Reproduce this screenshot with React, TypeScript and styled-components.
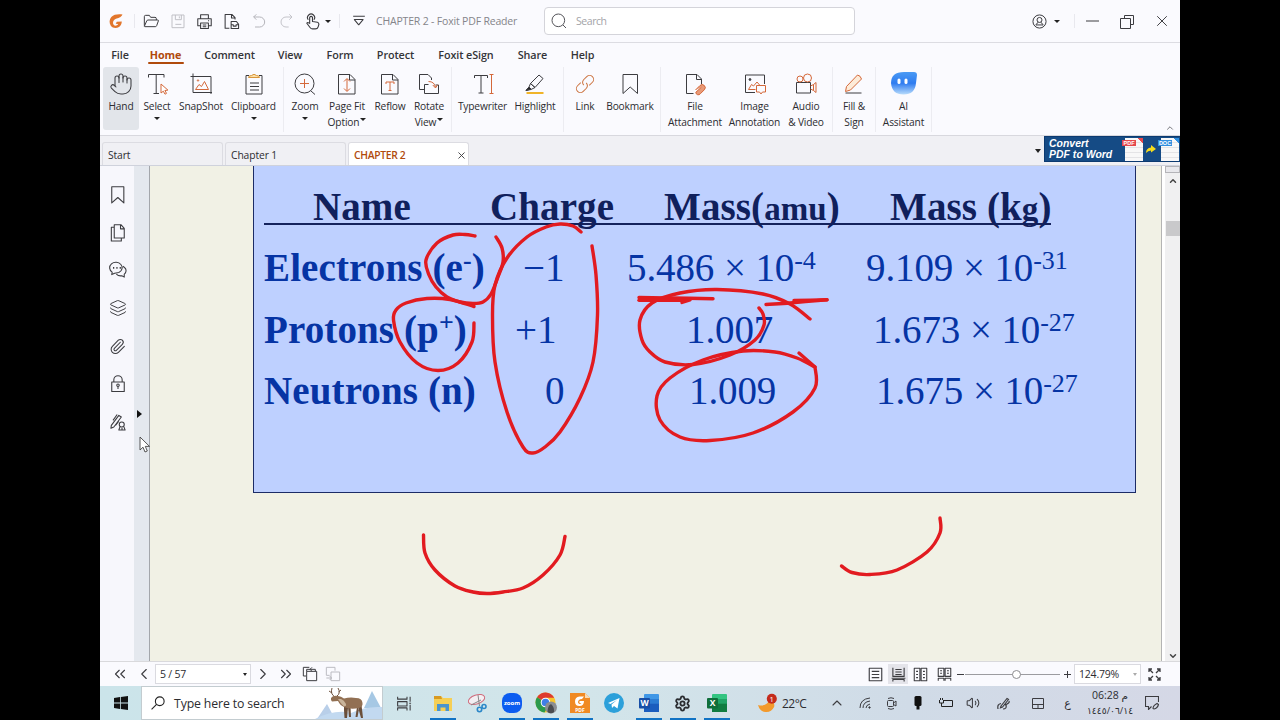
import React from "react";
import styled, { createGlobalStyle, css } from "styled-components";
import {
  ChevronDown,
  ChevronLeft,
  ChevronRight,
  ChevronsLeft,
  ChevronsRight,
  ChevronUp,
  Hand,
  Layers,
  Paperclip,
  Settings,
  Volume2,
  X,
} from "lucide-react";

const ink = "#3c3c40";
const accent = "#b04a0c";
const orange = "#d4683a";

const GlobalStyle = createGlobalStyle`
  * {
    box-sizing: border-box;
  }
  body {
    margin: 0;
    background: #000;
    font-family: "Open Sans", "Noto Sans", sans-serif;
    color: #2c2c30;
  }
  svg {
    display: block;
    flex: none;
  }
`;

const Desktop = styled.div`
  width: 1280px;
  height: 720px;
  display: flex;
  justify-content: center;
  overflow: hidden;
  background: #000;
`;
const Screen = styled.div`
  width: 1080px;
  height: 720px;
  display: flex;
  flex-direction: column;
  overflow: hidden;
  background: #fafafe;
`;
const Cell = styled.div<{ w: number }>`
  width: ${({ w }) => w}px;
  flex: none;
  display: flex;
  align-items: center;
  justify-content: center;
`;
const Spacer = styled.div`
  flex: 1;
`;
const VLine = styled.div`
  width: 1px;
  height: 14px;
  background: #e8e8ee;
`;
const Caret = styled.span<{ size?: number; color?: string }>`
  flex: none;
  width: 0;
  height: 0;
  border: ${({ size = 3 }) => size}px solid transparent;
  border-top: ${({ size = 3 }) => size + 0.5}px solid
    ${({ color = "#222" }) => color};
  border-bottom: 0;
`;

/* title bar */
const TitleBar = styled.div`
  height: 43px;
  flex: none;
  display: flex;
  align-items: center;
  border-bottom: 1px solid #dcdce2;
`;
const WindowTitle = styled.span`
  width: 168px;
  padding-left: 3px;
  font-size: 10.5px;
  letter-spacing: -0.18px;
  white-space: nowrap;
  color: #85858a;
`;
const SearchField = styled.div`
  width: 311px;
  height: 28px;
  display: flex;
  align-items: center;
  gap: 9px;
  padding-left: 6px;
  border: 1px solid #d4d4da;
  border-radius: 4px;
  background: #fff;
  font-size: 10.5px;
  letter-spacing: -0.45px;
  color: #a4a4a8;
`;

/* menu and ribbon */
const MenuBar = styled.div`
  height: 24px;
  flex: none;
  display: flex;
  padding-left: 2px;
`;
const MenuItem = styled.div<{ w: number; active?: boolean }>`
  width: ${({ w }) => w}px;
  display: flex;
  flex-direction: column;
  align-items: center;
  padding-top: 4px;
  font-size: 10.8px;
  font-weight: ${({ active }) => (active ? 700 : 600)};
  line-height: 16px;
  letter-spacing: -0.1px;
  white-space: nowrap;
  color: ${({ active }) => (active ? accent : "#343438")};
  ${({ active }) =>
    active &&
    css`
      &::after {
        content: "";
        width: 36px;
        height: 2.5px;
        margin-top: -1.5px;
        border-radius: 2px;
        background: ${accent};
      }
    `}
`;
const Ribbon = styled.div`
  height: 69px;
  flex: none;
  display: flex;
  border-bottom: 1px solid #d8d8de;
`;
const Group = styled.div<{ w: number; pad?: number }>`
  width: ${({ w }) => w}px;
  height: 65px;
  flex: none;
  display: flex;
  padding-left: ${({ pad = 0 }) => pad}px;
  border-right: 1px solid #ececf1;
`;
const ToolBox = styled.div<{ w: number; pressed?: boolean }>`
  width: ${({ w }) => w}px;
  height: 63px;
  flex: none;
  display: flex;
  flex-direction: column;
  align-items: center;
  padding-top: 5px;
  border-radius: 3px;
  font-size: 10.2px;
  line-height: 16px;
  letter-spacing: -0.16px;
  white-space: nowrap;
  background: ${({ pressed }) => (pressed ? "#e2e5ea" : "transparent")};
  svg + div {
    margin-top: 2px;
  }
  > ${Caret} {
    margin-top: 3px;
  }
`;
const Glyph = styled.svg`
  fill: none;
  stroke-width: 1;
  stroke-linejoin: round;
`;
const ToolLine = styled.div`
  display: flex;
  gap: 1px;
  ${Caret} {
    margin-top: 4px;
  }
`;
const Collapse = styled.div`
  flex: 1;
  display: flex;
  align-items: flex-end;
  justify-content: flex-end;
  padding: 0 5px 2px 0;
`;

/* document tabs */
const TabBar = styled.div`
  height: 29px;
  flex: none;
  display: flex;
  align-items: flex-end;
  gap: 2px;
  padding-left: 2px;
  background: #f0f0f4;
`;
const Tab = styled.div<{ active?: boolean }>`
  width: 121px;
  height: 23px;
  display: flex;
  align-items: center;
  justify-content: space-between;
  padding: 2px 1px 0 5px;
  border: 1px solid #dcdce2;
  border-bottom: 0;
  border-radius: 3px 3px 0 0;
  font-size: 10.3px;
  letter-spacing: -0.1px;
  background: ${({ active }) => (active ? "#fff" : "#f0f0f4")};
  color: ${({ active }) => (active ? accent : "#2c2c30")};
  ${({ active }) =>
    active &&
    css`
      font-weight: 600;
      letter-spacing: -0.3px;
    `}
`;
const TabMenu = styled.div`
  align-self: stretch;
  display: flex;
  align-items: center;
  padding: 1px 1px 0 0;
`;
const Banner = styled.div`
  width: 136px;
  height: 26px;
  align-self: flex-start;
  display: flex;
  align-items: center;
  padding-left: 4px;
  border: 1px solid #0c3a70;
  border-right: 0;
  background: #154b85;
`;
const BannerText = styled.div`
  width: 74px;
  font: italic bold 10.4px/11px "Liberation Sans", sans-serif;
  letter-spacing: 0.05px;
  white-space: nowrap;
  color: #fff;
`;
const FileCard = styled.div<{ tint: string }>`
  width: 18px;
  height: 23px;
  margin-left: 2px;
  padding: 2px 0 0;
  background:
    linear-gradient(225deg, ${({ tint }) => tint} 4px, transparent 4px),
    repeating-linear-gradient(#f8f8f8 0 4px, #e4e4e6 4px 5px);
  span {
    display: block;
    width: 14px;
    margin-left: -3px;
    background: ${({ tint }) => tint};
    font: bold 5.5px/6px "Liberation Sans", sans-serif;
    text-align: center;
    color: #fff;
  }
`;

/* document area */
const Body = styled.div`
  height: 497px;
  flex: none;
  display: flex;
  position: relative;
  border-top: 1px solid #cfd2dc;
  border-bottom: 1px solid #d9d9dc;
`;
const SideBar = styled.div`
  width: 34px;
  display: flex;
  flex-direction: column;
  padding: 10px 0 0 1px;
  background: #f7f7fc;
`;
const SideItem = styled.div`
  height: 37.8px;
  display: flex;
  align-items: center;
  justify-content: center;
`;
const Gutter = styled.div`
  width: 16px;
  display: flex;
  align-items: flex-start;
  padding: 244px 0 0 3px;
  border-right: 1px solid #a3a6ab;
  background: #e4e8ee;
`;
const Expander = styled.span`
  border: 4px solid transparent;
  border-left: 5px solid #111;
  border-right: 0;
`;
const Viewport = styled.div`
  width: 1012px;
  position: relative;
  padding-left: 103px;
  border-right: 1px solid #b4b4b4;
  background: #f1f1e5;
`;
const Slide = styled.div`
  width: 883px;
  height: 327px;
  padding: 16px 0 0 10px;
  border: 1px solid #1c2c66;
  border-top: 0;
  background: #bed0ff;
  font-family: "Liberation Serif", serif;
  font-size: 39px;
  line-height: 50px;
  white-space: nowrap;
`;
const SlideRow = styled.div`
  height: 61.5px;
  display: grid;
  grid-template-columns: 226px 137px 239px 220px;
  letter-spacing: -0.1px;
  color: #0634a4;
`;
const HeadRow = styled(SlideRow)`
  width: 787px;
  height: 43px;
  margin-bottom: 18px;
  border-bottom: 2px solid #14225c;
  font-weight: bold;
  letter-spacing: 0.1px;
  color: #10205c;
`;
const Value = styled.div<{ indent?: number; bold?: boolean }>`
  padding-left: ${({ indent = 0 }) => indent}px;
  ${({ bold }) =>
    bold &&
    css`
      font-weight: bold;
      letter-spacing: 0.12px;
    `}
  sup {
    font-size: 26px;
    line-height: 0;
    vertical-align: 12px;
  }
  small {
    font-size: 33px;
  }
`;
const InkLayer = styled.svg`
  position: absolute;
  inset: 0;
  fill: none;
  stroke: #e21b20;
  stroke-width: 3.4;
  stroke-linecap: round;
  stroke-linejoin: round;
`;
const Pointing = styled.svg`
  position: absolute;
  left: 39px;
  top: 270px;
`;
const ScrollBar = styled.div`
  width: 18px;
  display: flex;
  flex-direction: column;
  align-items: center;
  padding: 0 0 0 3px;
  background: linear-gradient(90deg, #fff 3px, #f0f0f1 3px);
`;
const Splitter = styled.div`
  width: 15px;
  height: 7px;
  margin-bottom: 3px;
  border: 1px solid #b4b4b8;
  background: #e8e8ec;
`;
const Thumb = styled.div`
  width: 14px;
  height: 15px;
  margin-top: 35px;
  background: #c9c9cb;
`;

/* status bar */
const StatusBar = styled.div`
  height: 24px;
  flex: none;
  display: flex;
  align-items: center;
  padding-left: 6px;
  background: #fafafe;
`;
const Combo = styled.div<{ w: number }>`
  width: ${({ w }) => w}px;
  height: 20px;
  display: flex;
  align-items: center;
  justify-content: space-between;
  padding: 0 3px 0 4px;
  border: 1px solid #dadae0;
  background: #fff;
  font-size: 10.5px;
  letter-spacing: -0.2px;
`;
const ViewMode = styled(Cell)<{ on?: boolean }>`
  height: 20px;
  background: ${({ on }) => (on ? "#e4e4ea" : "transparent")};
`;
const Track = styled.div`
  width: 95px;
  height: 1px;
  display: flex;
  align-items: center;
  padding-left: 47px;
  background: #9c9ca0;
`;
const Knob = styled.div`
  width: 9px;
  height: 9px;
  flex: none;
  border: 1px solid #8c8c90;
  border-radius: 50%;
  background: #fff;
`;

/* taskbar */
const TaskBar = styled.div`
  height: 34px;
  flex: none;
  display: flex;
  background: linear-gradient(90deg, #cbe4ea, #d2e5ea 45%, #d0dbe7 75%, #d5d8e6);
`;
const TaskSearch = styled.div`
  width: 242px;
  display: flex;
  align-items: center;
  gap: 9px;
  padding-left: 9px;
  border: 1px solid #c3ccd0;
  background: #fff;
  font-size: 12.3px;
  letter-spacing: -0.14px;
  white-space: nowrap;
`;
const TaskItem = styled(Cell)<{ running?: boolean }>`
  padding-top: 2px;
  border-bottom: 2px solid transparent;
  ${({ running }) =>
    running &&
    css`
      background: linear-gradient(#1173c4, #1173c4) center bottom / 26px 2px
        no-repeat border-box;
    `}
`;
const Temp = styled.div`
  width: 43px;
  display: flex;
  align-items: center;
  font-size: 12px;
  letter-spacing: -0.5px;
`;
const Clock = styled.div`
  width: 60px;
  display: flex;
  flex-direction: column;
  align-items: center;
  padding-top: 2px;
  font-size: 10.5px;
  line-height: 15px;
  letter-spacing: -0.2px;
  white-space: nowrap;
  font-family: "Open Sans", "DejaVu Sans", sans-serif;
`;
const ClockDate = styled.span`
  font-size: 9.2px;
`;
const Lang = styled.span`
  font: 11px "DejaVu Sans", sans-serif;
`;

interface IconProps {
  children: React.ReactNode;
  size?: number;
  color?: string;
}
const Icon = ({ children, size = 24, color = ink }: IconProps) => (
  <Glyph width={size} height={size} stroke={color} viewBox="0 0 24 24">
    {children}
  </Glyph>
);

interface ToolProps {
  w: number;
  lines: string[];
  icon: React.ReactNode;
  pressed?: boolean;
  menu?: boolean;
}
const Tool = ({ w, lines, icon, pressed, menu }: ToolProps) => (
  <ToolBox w={w} pressed={pressed}>
    {icon}
    {lines.map((line, i) => (
      <ToolLine key={line}>
        {line}
        {menu && i === 1 && <Caret />}
      </ToolLine>
    ))}
    {menu && lines.length === 1 && <Caret />}
  </ToolBox>
);

const pageFold = (
  <>
    <path d="M3.5 2.5h11.500l5 5v14.500h-16.500z" />
    <path d="M14.5 2.5v5.500h5.500" />
  </>
);

const menus: [string, number][] = [
  ["File", 36],
  ["Home", 55],
  ["Comment", 73],
  ["View", 48],
  ["Form", 52],
  ["Protect", 59],
  ["Foxit eSign", 82],
  ["Share", 51],
  ["Help", 49],
];

type Point = [number, number];

const strokes: Point[][] = [
  [[475, 236], [465, 234.5], [453, 235], [437, 243], [426, 260], [429, 275], [436, 287], [447, 297], [460, 302], [473, 303.5], [483, 302], [491, 294], [498, 277], [503, 262], [502, 248], [496, 237]],
  [[592, 246], [596, 275], [597.5, 315], [593, 362], [580, 398], [560, 432], [545, 447], [533, 453], [523, 447], [507, 412], [495, 362], [492.5, 315], [495, 285], [507, 258], [527, 237], [546, 227], [560, 224], [573, 226], [581, 232]],
  [[474, 306.5], [450, 299.5], [427, 298.5], [406, 303], [396, 310], [393.5, 320], [400, 342], [417, 363], [438, 370.5], [458, 363], [472, 342], [474, 323]],
  [[810, 319], [790, 304], [763, 294], [717, 289.5], [680, 293], [652, 303], [640, 320], [642, 340], [650, 352], [665, 362], [693, 364.5], [730, 355], [755, 340], [764, 325], [763, 314], [759, 308]],
  [[799, 353], [815, 367]],
  [[815, 367], [815, 388], [793, 412], [753, 433], [710, 440.5], [680, 437], [660, 420], [657, 396], [670, 378], [703, 360], [743, 351], [775, 352], [797, 358], [815, 367]],
  [[639, 297.5], [670, 298], [713, 298.7]],
  [[639, 300.3], [687, 300.3]],
  [[682, 302.5], [690, 300]],
  [[766, 304.5], [787, 303.2], [827, 299.8]],
  [[794, 300.5], [827, 299.8]],
  [[423.5, 535], [425, 553], [435, 570], [455, 586], [473, 592], [487, 593.5], [503, 592], [523, 588], [543, 575], [560, 555], [565, 536.5]],
  [[841.5, 566], [852, 572.5], [870, 574.5], [897, 570], [927, 552], [940, 533], [940, 518]],
];

// Catmull-Rom through the pen samples
const toPath = (pts: Point[]) =>
  pts.slice(1).reduce((d, p, i) => {
    const a = pts[i];
    const before = pts[i - 1] || a;
    const after = pts[i + 2] || p;
    const c1 = [a[0] + (p[0] - before[0]) / 6, a[1] + (p[1] - before[1]) / 6];
    const c2 = [p[0] - (after[0] - a[0]) / 6, p[1] - (after[1] - a[1]) / 6];
    return `${d}C${c1} ${c2} ${p}`;
  }, `M${pts[0]}`);

const Header = () => (
  <TitleBar>
    <Cell w={32}>
      <svg width="14" height="15" viewBox="0 0 14 15">
        <path
          d="M13.5.6C9.500 0 5 .3 2.300 3 .2 5.300 0 9 1.800 11.800c1.900 2.500 5.500 2.900 8.200 1.200 1.700-1.100 2.700-3 2.800-5.500L7.800 7.800 6.700 9.700l2.500.3c-1 1.800-3.400 2.200-4.500.8C3.200 8.800 4.500 5.700 7 4.800c2.200-.7 4.600-.8 6.500-4.200z"
          fill="#e2762c"
        />
      </svg>
    </Cell>
    <Cell w={5}>
      <VLine />
    </Cell>
    <Cell w={27}>
      <Icon size={16}>
        <g strokeWidth="1.500">
          <path d="M2 19V5.500q0-2 2-2h5.500l2 3H18q2 0 2 2v2M2 20l3.500-8q.7-1.500 2-1.500h14.500q1.500 0 1 1.500l-2.500 7q-.5 1.500-2 1.500H3q-1 0-1-.5z" />
        </g>
      </Icon>
    </Cell>
    <Cell w={27}>
      <Icon size={16} color="#c0c0c6">
        <path strokeWidth="1.500" d="M3 3h18v19H3zM8 3v7h9V3M14 5v3M8 17h9" />
      </Icon>
    </Cell>
    <Cell w={27}>
      <Icon size={17}>
        <path
          strokeWidth="1.500"
          d="M6.500 8V2.500h11V8M6.500 18H2.500V8h19v10h-4M6.500 14h11v8h-11zM9.500 17h5M9.500 19.500h5M17 11h1.500"
        />
      </Icon>
    </Cell>
    <Cell w={27}>
      <Icon size={17}>
        <path
          strokeWidth="1.500"
          d="M9 21.500H3V2h9.500l4.500 4.500V9M12 2v5h5M11.500 12h7.500l3 4v6H11.500zM11.500 16.500h3v2h4v-2H22"
        />
      </Icon>
    </Cell>
    <Cell w={27}>
      <Icon size={16} color="#b4b4ba">
        <path strokeWidth="1.500" d="M8 2 4 6l4 4M4 6h9a7.500 7.500 0 0 1 0 15H6" />
      </Icon>
    </Cell>
    <Cell w={27}>
      <Icon size={16} color="#c4c4ca">
        <path strokeWidth="1.500" d="m17 2 4 4-4 4M21 6h-9a7.500 7.500 0 0 0 0 15h4" />
      </Icon>
    </Cell>
    <Cell w={27}>
      <Icon size={17}>
        <path
          strokeWidth="1.600"
          d="M8 15V6q2-2.500 4 0v6l7 1q2 .5 2 3l-1 3.500q-1 3-4 3h-4q-2 0-3.500-2l-4.500-6q1-2.500 4 .5"
        />
        <path strokeWidth="1.600" d="M6 9.500a5 5 0 1 1 8 0" />
      </Icon>
    </Cell>
    <Cell w={3}>
      <Caret />
    </Cell>
    <Cell w={20}>
      <VLine />
    </Cell>
    <Cell w={20}>
      <Icon size={14}>
        <path strokeWidth="1.800" d="M2 4h20M4 9.500h15l-7.500 9z" />
      </Icon>
    </Cell>
    <Cell w={4} />
    <WindowTitle>CHAPTER 2 - Foxit PDF Reader</WindowTitle>
    <Spacer />
    <SearchField>
      <Icon size={16} color="#55555a">
        <circle cx="11" cy="11" r="9.500" strokeWidth="1.500" />
        <path strokeWidth="1.500" d="m18 18 4.500 4.500" />
      </Icon>
      Search
    </SearchField>
    <Cell w={170} />
    <Cell w={28}>
      <Icon size={15}>
        <g strokeWidth="1.600">
          <circle cx="12" cy="12" r="10.500" />
          <circle cx="12" cy="9.500" r="4" />
          <path d="M6.500 18v-1q1-2.500 3.500-3.500M17.500 18v-1q-1-2.500-3.500-3.500M6.500 17.500h11" />
        </g>
      </Icon>
    </Cell>
    <Cell w={8}>
      <Caret />
    </Cell>
    <Cell w={27}>
      <VLine />
    </Cell>
    <Cell w={8}>
      <svg width="13" height="2">
        <path d="M0 1h13" stroke={ink} />
      </svg>
    </Cell>
    <Cell w={62}>
      <svg width="15" height="15" fill="none" stroke={ink}>
        <path d="M.5 4.500h10v10H.5zM4.500 4.500v-3h9v9h-3" />
      </svg>
    </Cell>
    <Cell w={8}>
      <X size={18} strokeWidth={1.300} color={ink} />
    </Cell>
    <Cell w={14} />
  </TitleBar>
);

const RibbonBar = () => (
  <Ribbon>
    <Group w={184} pad={3}>
      <Tool
        w={36}
        lines={["Hand"]}
        pressed
        icon={<Hand size={24} strokeWidth={1.050} color={ink} />}
      />
      <Tool
        w={36}
        lines={["Select"]}
        menu
        icon={
          <Icon>
            <path d="M3.500 5.500v-3h15.500v3M11.200 2.500V21M8.500 21.500h5.500" />
            <path d="M16 12v9l2.300-1.800 1.700 3 1.500-.8-1.600-2.900 3-.4z" stroke={orange} fill="#fff" />
          </Icon>
        }
      />
      <Tool
        w={52}
        lines={["SnapShot"]}
        icon={
          <Icon>
            <path d="M1.500 4.500h20.500v17.500M4 1.500V20.500h19" />
            <path d="m6.500 17.500 3.500-5 2.500 2 3-5 4 8z" stroke={orange} />
            <circle cx="9" cy="8.500" r=".7" stroke={orange} />
          </Icon>
        }
      />
      <Tool
        w={53}
        lines={["Clipboard"]}
        menu
        icon={
          <Icon>
            <path d="M7 3.500H4v18.500h16V3.500h-3M8 11h9M8 14.500h9M8 18h9" />
            <path d="M6.500 5.500q0-2 3-2 2.500-2.500 5 0 3 0 3 2z" fill="#fbe0a8" stroke="#d8963c" />
          </Icon>
        }
      />
    </Group>
    <Group w={168}>
      <Tool
        w={42}
        lines={["Zoom"]}
        menu
        icon={
          <Icon>
            <circle cx="11.500" cy="11.500" r="9.500" />
            <path d="m18 19 4 3.500" />
            <path d="M11.500 7v9M7 11.500h9" stroke={orange} />
          </Icon>
        }
      />
      <Tool
        w={42}
        lines={["Page Fit", "Option"]}
        menu
        icon={
          <Icon>
            {pageFold}
            <path d="M12 7v12M9 9.500l3-3 3 3M9 16.500l3 3 3-3" stroke={orange} />
          </Icon>
        }
      />
      <Tool
        w={44}
        lines={["Reflow"]}
        icon={
          <Icon>
            {pageFold}
            <path d="M8 12v-2h8v2M12 10v8.500M10.500 18.500h3" stroke={orange} />
          </Icon>
        }
      />
      <Tool
        w={34}
        lines={["Rotate", "View"]}
        menu
        icon={
          <Icon>
            <path d="M7 17.500H2.500v-15h8.500l3.500 3.500v2M7.500 12.500v9h14v-8.500h-3M7.500 12.500h4" />
            <path d="M11.500 9.500q6 0 7 6M15.800 13l2.700 3 2.200-3.300" stroke={orange} />
          </Icon>
        }
      />
    </Group>
    <Group w={112}>
      <Tool
        w={61}
        lines={["Typewriter"]}
        icon={
          <Icon>
            <path d="M3.500 6v-2.500h13V6M10 3.500v17.500M7.500 21h5" />
            <path d="M18.500 2.500h4M20.500 2.500v19M18.500 21.500h4" stroke={orange} />
          </Icon>
        }
      />
      <Tool
        w={44}
        lines={["Highlight"]}
        icon={
          <Icon>
            <path d="m7.500 11.500 8.500-8.500 4 3.500-8 9zM7.500 11.500 6 15l-3 3.500 5-1 4-2z" />
            <path d="m3 18.500 3-3.500 2 2z" fill="#222" />
            <path d="M3.500 21h17" stroke="#f0b429" strokeWidth="2" />
          </Icon>
        }
      />
    </Group>
    <Group w={97}>
      <Tool
        w={42}
        lines={["Link"]}
        icon={
          <Icon color="#cc7440">
            <path
              transform="rotate(-45 12 12)"
              d="M10 8H5.500a4 4 0 0 0 0 8H10q3.500-.5 3.700-4M14 16h4.500a4 4 0 0 0 0-8H14q-3.500.5-3.700 4"
            />
          </Icon>
        }
      />
      <Tool
        w={48}
        lines={["Bookmark"]}
        icon={
          <Icon>
            <path d="M5 2.500h14.500v19l-7.300-6.500L5 21.500z" />
          </Icon>
        }
      />
    </Group>
    <Group w={172}>
      <Tool
        w={68}
        lines={["File", "Attachment"]}
        icon={
          <Icon>
            <path d="M10.500 21.500h-7v-19h10.500l4.500 4.500v5M13.500 2.500v5h5" />
            <path d="m12.500 18 4.500-4.500a3 3 0 0 1 4.300 4.300l-4 4a2.500 2.500 0 0 1-4.500-1.500l5.500-5" stroke={orange} fill="#e99a78" />
          </Icon>
        }
      />
      <Tool
        w={51}
        lines={["Image", "Annotation"]}
        icon={
          <Icon>
            <path d="M12 20.500H2.500v-17.500h19V12" />
            <circle cx="7" cy="7.500" r=".9" fill={ink} />
            <path d="m5.500 17.500 3-5 2 1.500 3.500-4 3 3.500M5.500 17.500h7M13.500 13.500h9v6.500h-3l-1.500 2-1.500-2h-3z" stroke={orange} />
          </Icon>
        }
      />
      <Tool
        w={52}
        lines={["Audio", "& Video"]}
        icon={
          <Icon>
            <path d="M2.500 10.500h14v10.500h-14z" />
            <circle cx="6" cy="7" r="3" stroke={orange} />
            <circle cx="13.500" cy="6" r="4" stroke={orange} />
            <path d="m16.500 14 3-1.500v6l-3-1.500M19.500 12.500l2.500-2v10l-2.500-2" stroke={orange} />
          </Icon>
        }
      />
    </Group>
    <Group w={43}>
      <Tool
        w={42}
        lines={["Fill &", "Sign"]}
        icon={
          <Icon>
            <path d="m4.500 14.500 11-11.500q3 .5 4 4l-11 11-5 1.500z" stroke={orange} fill="#fdebd8" />
            <path d="M3.500 21h16" />
          </Icon>
        }
      />
    </Group>
    <Group w={56}>
      <Tool
        w={55}
        lines={["AI", "Assistant"]}
        icon={
          <svg width="28" height="24" viewBox="0 0 28 24">
            <defs>
              <linearGradient id="ai" x1="0" y1="0" x2="0" y2="1">
                <stop offset="0" stopColor="#4a9af4" />
                <stop offset=".5" stopColor="#2f7cf0" />
                <stop offset="1" stopColor="#b8dcfb" />
              </linearGradient>
            </defs>
            <path d="M1 11Q1 0 14 0h10q3 0 3 3-.5 4-1 8-1 11.500-12.500 11.500T1 11z" fill="url(#ai)" />
            <rect x="7.500" y="6.500" width="3" height="5.500" rx="1.500" fill="#fff" />
            <rect x="14.500" y="6.500" width="3" height="5.500" rx="1.500" fill="#fff" />
          </svg>
        }
      />
    </Group>
    <Collapse>
      <ChevronUp size={10} strokeWidth={2.400} color="#77777c" />
    </Collapse>
  </Ribbon>
);

const SideTools = () => (
  <SideBar>
    <SideItem>
      <Icon size={20}>
        <path strokeWidth="1.300" d="M4.500 2h14.500v19.500l-7.200-6.500-7.300 6.500z" />
      </Icon>
    </SideItem>
    <SideItem>
      <Icon size={20}>
        <path strokeWidth="1.300" d="M7.500 2h8l4 4.500V18h-12zM15 2v5h4.500M7.500 5H4v16.500h12V18" />
      </Icon>
    </SideItem>
    <SideItem>
      <Icon size={20}>
        <g strokeWidth="1.300">
          <path d="M5 14.500A7.500 6.500 0 1 1 13 15l-5 .8-3.500 1.700z" />
          <path d="M18 7.500q4.500 3 3.500 6.500-.5 2-2 3v3.500l-3-1.500q-4 .5-6.500-2" />
          <path d="M6 9.500h1.500M10 9.500h1.500M14 9.500h1.500" strokeWidth="2" />
        </g>
      </Icon>
    </SideItem>
    <SideItem>
      <Layers size={18} strokeWidth={1.300} color={ink} />
    </SideItem>
    <SideItem>
      <Paperclip size={17} strokeWidth={1.500} color={ink} />
    </SideItem>
    <SideItem>
      <Icon size={20}>
        <g strokeWidth="1.300">
          <path d="M4.500 9.500h15V21h-15zM7 9.500V7a5 5 0 0 1 10 0v2.500" />
          <path d="M12 18v-3" />
          <circle cx="12" cy="13.500" r="1.500" />
        </g>
      </Icon>
    </SideItem>
    <SideItem>
      <Icon size={20}>
        <g strokeWidth="1.300">
          <path d="m4 16 9-12 3 2-9 12-3.500 1.500zM6 10l5-7M9 16l4-5" />
          <circle cx="16.500" cy="15" r="3" />
          <path d="M14.500 17.500 13 21.500h7.500l-1.500-4M16.800 19v2" />
        </g>
      </Icon>
    </SideItem>
  </SideBar>
);

const DocumentArea = () => (
  <Body>
    <SideTools />
    <Gutter>
      <Expander />
    </Gutter>
    <Viewport>
      <Slide>
        <HeadRow>
          <Value indent={49}>Name</Value>
          <Value>Charge</Value>
          <Value indent={37}>
            Mass(<small>amu</small>)
          </Value>
          <Value indent={24}>
            Mass (k<small>g</small>)
          </Value>
        </HeadRow>
        <SlideRow>
          <Value bold>
            Electrons (e<sup>-</sup>)
          </Value>
          <Value indent={33}>−1</Value>
          <Value>
            5.486 × 10<sup>-4</sup>
          </Value>
          <Value>
            9.109 × 10<sup>-31</sup>
          </Value>
        </SlideRow>
        <SlideRow>
          <Value bold>
            Protons (p<sup>+</sup>)
          </Value>
          <Value indent={25}>+1</Value>
          <Value indent={59}>1.007</Value>
          <Value indent={7}>
            1.673 × 10<sup>-27</sup>
          </Value>
        </SlideRow>
        <SlideRow>
          <Value bold>Neutrons (n)</Value>
          <Value indent={55}>0</Value>
          <Value indent={62}>1.009</Value>
          <Value indent={10}>
            1.675 × 10<sup>-27</sup>
          </Value>
        </SlideRow>
      </Slide>
      <InkLayer width="1011" height="494" viewBox="150 166 1011 494">
        {strokes.map((pts, i) => (
          <path key={i} d={toPath(pts)} />
        ))}
      </InkLayer>
    </Viewport>
    <ScrollBar>
      <Splitter />
      <ChevronUp size={10} strokeWidth={3.500} color="#444" />
      <Thumb />
      <Spacer />
      <ChevronDown size={10} strokeWidth={3.500} color="#444" />
    </ScrollBar>
    <Pointing width="12" height="18" viewBox="0 0 12 18">
      <path
        d="M1 1v13l3-2.800 2 4.800 2.300-1-2-4.600h4.200z"
        fill="#fff"
        stroke="#444"
        strokeWidth=".9"
      />
    </Pointing>
  </Body>
);

const Footer = () => (
  <StatusBar>
    <Cell w={27}>
      <ChevronsLeft size={18} strokeWidth={1.500} color={ink} />
    </Cell>
    <Cell w={22}>
      <ChevronLeft size={18} strokeWidth={1.500} color={ink} />
    </Cell>
    <Combo w={96}>
      5 / 57
      <Caret size={2.500} />
    </Combo>
    <Cell w={23}>
      <ChevronRight size={18} strokeWidth={1.500} color={ink} />
    </Cell>
    <Cell w={24}>
      <ChevronsRight size={18} strokeWidth={1.500} color={ink} />
    </Cell>
    <Cell w={23}>
      <Icon size={16}>
        <path strokeWidth="1.500" d="M6 15H2V2h9M7 8h15v14H7zM7 8V5h13v3M15 2l-3 3 3 3" />
      </Icon>
    </Cell>
    <Cell w={24}>
      <Icon size={16} color="#bcbcc2">
        <path strokeWidth="1.500" d="M7 14H2V2h13v5M9 9h13v13H9zM2 18h8M7 15l3 3-3 3" />
      </Icon>
    </Cell>
    <Spacer />
    <ViewMode w={26}>
      <Icon size={15}>
        <path strokeWidth="1.800" d="M2 2h20v20H2zM6 7h12M6 12h12M6 17h12" />
      </Icon>
    </ViewMode>
    <ViewMode w={20} on>
      <Icon size={15}>
        <path strokeWidth="1.800" d="M3 1v14h18V1M7 4h10M7 8h10M7 12h10M1 18h22M3 23v-3h18v3" />
      </Icon>
    </ViewMode>
    <ViewMode w={25}>
      <Icon size={15}>
        <path
          strokeWidth="1.700"
          d="M2 2h9v20H2zM13 2h9v20h-9zM5 7h3M5 12h3M5 17h3M16 7h3M16 12h3M16 17h3"
        />
      </Icon>
    </ViewMode>
    <ViewMode w={22}>
      <Icon size={15}>
        <path
          strokeWidth="1.700"
          d="M2 2h9v13H2zM13 2h9v13h-9zM5 6h3M5 10h3M16 6h3M16 10h3M2 22v-4h9v4M13 22v-4h9v4"
        />
      </Icon>
    </ViewMode>
    <Cell w={10}>
      <svg width="7" height="7">
        <path d="M0 3.500h7" stroke={ink} />
      </svg>
    </Cell>
    <Track>
      <Knob />
    </Track>
    <Cell w={14}>
      <svg width="7" height="7">
        <path d="M0 3.500h7M3.500 0v7" stroke={ink} />
      </svg>
    </Cell>
    <Combo w={67}>
      124.79%
      <Caret size={2.500} color="#aaa" />
    </Combo>
    <Cell w={26}>
      <svg width="13" height="13" fill="none" stroke={ink} strokeWidth="1.300">
        <path d="M1 4V1h3M1 1l4 4M9 1h3v3M12 1 8 5M1 9v3h3M1 12l4-4M9 12h3V9M12 12 8 8" />
      </svg>
    </Cell>
    <Cell w={13} />
  </StatusBar>
);

const Office = ({ shades, letter }: { shades: string[]; letter: string }) => (
  <svg width="20" height="18" viewBox="0 0 20 18">
    <rect x="5" width="15" height="18" rx="1" fill={shades[0]} />
    <path d="M5 5h15v4.500H5z" fill={shades[1]} />
    <path d="M5 9.500h15V18H5z" fill={shades[2]} />
    <rect y="4" width="11" height="10.500" rx="1" fill={shades[3]} />
    <text
      x="5.500"
      y="12.300"
      textAnchor="middle"
      fontSize="8.500"
      fontWeight="bold"
      fontFamily="Open Sans, sans-serif"
      fill="#fff"
    >
      {letter}
    </text>
  </svg>
);

const Reindeer = () => (
  <svg width="67" height="32" viewBox="0 0 67 32">
    <path d="m2 32 10-15 8 15z" fill="#b9cfe9" />
    <path d="M49 21 57 4l9 17z" fill="#a6c8e4" />
    <path d="M0 32q20-10 36-6 14-7 31-6v12z" fill="#c2d9f0" />
    <path d="M20 10q-5-3-3-9M22 9q4-3 1-8M17 6l-3-2M23.500 5l2.500-2" stroke="#6f5340" fill="none" />
    <path d="M29 16h4l0 5-1 10h-2.500l-.5-8zM41 17l5-2 1 7 1 9h-2l-2.500-9zM33 20l2.500 0 .5 10h-2zM42 20l-1.500 10h2l1.500-8z" fill="#6b4f3a" />
    <path d="M16 11q2-3 7-2 3 0 6 2.500 6-1.500 12-.5 6 0 6.500 5 .5 4-3.500 5-8 1.500-14-.5-5-2-7-6.500l-6 .5q-1.500-1.500-1-3.500z" fill="#927053" />
    <path d="M23 12q3 5 5.500 7 3 1 2.500-2-2-4-5-5z" fill="#c9b49a" />
  </svg>
);

const Tasks = () => (
  <TaskBar>
    <Cell w={41}>
      <svg width="14" height="14" viewBox="0 0 14 14" fill="#111">
        <path d="M0 2l6-.9v5.500H0zM6.800 1 14 0v6.600H6.800zM0 7.400h6v5.500L0 12zM6.800 7.400H14V14l-7.200-1z" />
      </svg>
    </Cell>
    <TaskSearch>
      <Icon size={14} color="#222">
        <circle cx="15" cy="9" r="7.500" strokeWidth="1.900" />
        <path strokeWidth="1.900" d="M9.500 14.500 1 23" />
      </Icon>
      Type here to search
      <Spacer />
      <Reindeer />
    </TaskSearch>
    <Cell w={43}>
      <Icon size={15}>
        <path strokeWidth="1.700" d="M1 1v4h15V1M1 9h15v7H1zM1 23v-4h15v4M21 1v8M21 14v9M19.500 11.500h3" />
      </Icon>
    </Cell>
    <TaskItem w={34.25} running>
      <svg width="18" height="15" viewBox="0 0 18 15">
        <path d="M0 0h7l2 2h9v13H0z" fill="#f6cf55" />
        <path d="M0 0h7l1 3H0z" fill="#d89a22" />
        <path d="M3 15V8h12v7h-3.500v-3.500h-5V15z" fill="#4a94cf" />
      </svg>
    </TaskItem>
    <TaskItem w={34.25}>
      <svg width="20" height="20" viewBox="0 0 20 20" fill="none">
        <ellipse cx="9.500" cy="6.500" rx="8.500" ry="4.500" transform="rotate(-18 9.500 6.500)" stroke="#cf6b7c" fill="#f3eef2" />
        <path d="m11 2 1.500 11M4 12l10-5" stroke="#888" />
        <circle cx="12.500" cy="16.500" r="2.200" stroke="#2b87c8" strokeWidth="1.600" />
        <circle cx="17" cy="13.500" r="2" stroke="#2b87c8" strokeWidth="1.600" />
      </svg>
    </TaskItem>
    <TaskItem w={34.25} running>
      <svg width="20" height="20" viewBox="0 0 20 20">
        <rect width="20" height="20" rx="8" fill="#0b5cf0" />
        <text x="10" y="12" textAnchor="middle" fontSize="6" fontWeight="bold" fontFamily="Open Sans, sans-serif" fill="#fff">
          zoom
        </text>
      </svg>
    </TaskItem>
    <TaskItem w={34.25} running>
      <svg width="22" height="22" viewBox="0 0 22 22">
        <circle cx="10.500" cy="10.500" r="10" fill="#f7c52c" />
        <path d="M10.500 10.500 2 5.200A10 10 0 0 1 19.300 5.700H10.500z" fill="#de3b30" />
        <path d="M10.500 10.500 2 5.200a10 10 0 0 0 7.500 15.200l4-7z" fill="#2b9a4c" />
        <circle cx="10.500" cy="10.500" r="4.800" fill="#fff" />
        <circle cx="10.500" cy="10.500" r="3.800" fill="#3f7fe8" />
        <circle cx="16" cy="15.500" r="6" fill="#8b8e92" />
        <path d="M12.500 20q0-6 3.500-8 3.500 3 3 8-3 2.500-6.500 0z" fill="#4a4c50" />
      </svg>
    </TaskItem>
    <TaskItem w={34.25} running>
      <svg width="20" height="20" viewBox="0 0 20 20">
        <path d="M0 0h15l5 5v15H0z" fill="#f08a24" />
        <path d="M15 0v5h5z" fill="#fbd9b0" />
        <path d="M14 3.500H9.500Q5 4 5 8.500T9.500 13t4.500-5H9.500v2h2Q9 12 8 9.500 8 6 12 6z" fill="#fff" />
        <text x="10" y="18.500" textAnchor="middle" fontSize="5" fontWeight="bold" fontFamily="Open Sans, sans-serif" fill="#fff">
          PDF
        </text>
      </svg>
    </TaskItem>
    <TaskItem w={34.25}>
      <svg width="20" height="20" viewBox="0 0 20 20">
        <circle cx="10" cy="10" r="10" fill="#2ca0da" />
        <path d="m4 10 11.500-5-2 10.500-3.500-2.500-2 2-.5-3.500L13 7l-6.500 4z" fill="#fff" />
      </svg>
    </TaskItem>
    <TaskItem w={34.25} running>
      <Office letter="W" shades={["#3f97e6", "#2b7cd3", "#1a5dbe", "#174ea6"]} />
    </TaskItem>
    <TaskItem w={34.25} running>
      <Settings size={17} strokeWidth={2.600} color="#2a2c30" />
    </TaskItem>
    <TaskItem w={34.25} running>
      <Office letter="X" shades={["#33c481", "#21a366", "#107c41", "#0f6e3a"]} />
    </TaskItem>
    <Spacer />
    <Cell w={29}>
      <svg width="20" height="20" viewBox="0 0 21 20">
        <path d="M0 12q6 2 10-2 2-3 2-5 6 3 5 9-3 6-9 5.500Q2 19 0 12z" fill="#f39a2c" />
        <circle cx="14.500" cy="5.500" r="5.300" fill="#c42b1c" />
        <text x="14.500" y="8.500" textAnchor="middle" fontSize="8" fontFamily="Open Sans, sans-serif" fill="#fff">
          1
        </text>
      </svg>
    </Cell>
    <Temp>22°C</Temp>
    <Cell w={24}>
      <ChevronUp size={16} strokeWidth={1.600} color={ink} />
    </Cell>
    <Cell w={32}>
      <svg width="12" height="12" fill="none" stroke={ink}>
        <path d="M1 11Q1 2 11 1M4 11q0-6 7-7M7 11q0-3 4-4" />
        <circle cx="10.500" cy="10.500" r=".7" fill={ink} />
      </svg>
    </Cell>
    <Cell w={22}>
      <svg width="12" height="13" fill="none" stroke={ink}>
        <rect x="1.500" y="3.500" width="6" height="6" rx="1" />
        <path d="m7.500 6 2.500-2v5L7.500 7.500M2 1.500q3-1.500 6 0M2 11.500q3 1.500 6 0" />
      </svg>
    </Cell>
    <Cell w={30}>
      <svg width="10" height="14">
        <rect x="1.500" width="7" height="10" rx="1.500" fill="#111" />
        <path d="M3.500 10h3v3.500h-3z" fill="#111" />
      </svg>
    </Cell>
    <Cell w={26}>
      <svg width="14" height="10" fill="none" stroke="#222">
        <path d="M5 2.500h8.500v6H5M.5 2v3h4V2M2.500 5v3.500H5M1.500 0v2M3.500 0v2" />
      </svg>
    </Cell>
    <Cell w={28}>
      <Volume2 size={14} strokeWidth={1.800} color={ink} />
    </Cell>
    <Cell w={33}>
      <svg width="13" height="13" fill="none" stroke={ink} strokeWidth="1.200">
        <path d="m4 9 6-7.500 1.500 1-6 7.500-2 .8zM1 12q-1-5 3-5.500M8 8q5-2 4-4M6 12q4 0 3-4" />
      </svg>
    </Cell>
    <Cell w={35}>
      <svg width="12" height="11" fill="none" stroke={ink}>
        <path d="M.5.5h11v10H.5zM.5 6.500h11M6 6.500v4" />
      </svg>
    </Cell>
    <Cell w={25}>
      <Lang>ع</Lang>
    </Cell>
    <Clock>
      <span>06:28 م</span>
      <ClockDate>١٤٤٥/٠٦/١٤</ClockDate>
    </Clock>
    <Cell w={23}>
      <svg width="14" height="14" fill="none" stroke={ink} strokeWidth="1.100">
        <path d="M13.500 6V.5H.5v10h3v3l3-3M8 12.500q0-3 4-5l1.500 1q-1 4-4.500 4.500z" />
      </svg>
    </Cell>
    <Cell w={17} />
  </TaskBar>
);

export default function App() {
  return (
    <Desktop>
      <GlobalStyle />
      <Screen>
        <Header />
        <MenuBar>
          {menus.map(([label, w]) => (
            <MenuItem key={label} w={w} active={label === "Home"}>
              {label}
            </MenuItem>
          ))}
        </MenuBar>
        <RibbonBar />
        <TabBar>
          <Tab>Start</Tab>
          <Tab>Chapter 1</Tab>
          <Tab active>
            CHAPTER 2
            <X size={11} strokeWidth={2} color={ink} />
          </Tab>
          <Spacer />
          <TabMenu>
            <Caret size={3.500} />
          </TabMenu>
          <Banner>
            <BannerText>
              Convert
              <br />
              PDF to Word
            </BannerText>
            <FileCard tint="#e5484d">
              <span>PDF</span>
            </FileCard>
            <Cell w={16}>
              <svg width="10" height="8" viewBox="0 0 10 8">
                <path d="M0 8q0-5 5-5.500V0l5 4-5 3.500V5.500Q2 5.500 0 8z" fill="#f4dc1c" />
              </svg>
            </Cell>
            <FileCard tint="#2f8fe0">
              <span>DOC</span>
            </FileCard>
          </Banner>
        </TabBar>
        <DocumentArea />
        <Footer />
        <Tasks />
      </Screen>
    </Desktop>
  );
}
